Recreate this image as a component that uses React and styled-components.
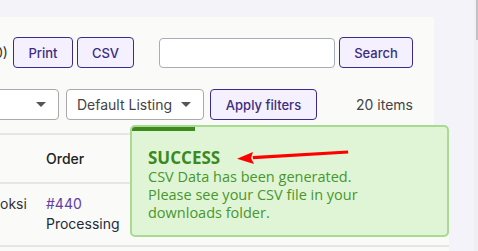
import React from "react";
import styled, { createGlobalStyle } from "styled-components";

const GlobalStyle = createGlobalStyle`
  html, body {
    margin: 0;
    padding: 0;
    overflow: hidden;
    background: #f4f3fa;
  }
  body {
    font-family: "Inter", "Liberation Sans", sans-serif;
  }
`;

const orders = [
  { customer: "oksi", number: "#440", status: "Processing" },
];

function App() {
  return (
    <Screen>
      <GlobalStyle />
      <Main>
        <Toolbar>
          <ActionRow>
            <Group>
              <Count>0)</Count>
              <Button $width={60}>Print</Button>
              <Button $width={57}>CSV</Button>
            </Group>
            <Group>
              <SearchInput type="text" />
              <Button $width={74}>Search</Button>
            </Group>
          </ActionRow>
          <FilterRow>
            <Select $width={140} $offset={-81}>
              <span></span>
              <Caret />
            </Select>
            <Select $width={138}>
              <span>Default Listing</span>
              <Caret />
            </Select>
            <Button $width={107}>Apply filters</Button>
            <ItemCount>20 items</ItemCount>
          </FilterRow>
        </Toolbar>

        <Table>
          <HeadRow>
            <NameCell></NameCell>
            <HeadCell>Order</HeadCell>
          </HeadRow>
          {orders.map((o) => (
            <BodyRow key={o.number}>
              <NameCell>{o.customer}</NameCell>
              <OrderCell>
                <OrderLink>{o.number}</OrderLink>
                <Status>{o.status}</Status>
              </OrderCell>
            </BodyRow>
          ))}
        </Table>

        <Toast>
          <Progress />
          <ToastTitle>SUCCESS</ToastTitle>
          <ToastText>
            CSV Data has been generated.
            <br />
            Please see your CSV file in your
            <br />
            downloads folder.
          </ToastText>
        </Toast>

        <Arrow width="120" height="20" viewBox="0 0 120 20">
          <polygon points="111,4.5 111.3,7.5 16,13.2 15.7,10" fill="#ff0000" />
          <polygon points="0,12.8 16,6 14,12 17,18" fill="#ff0000" />
        </Arrow>
      </Main>
      <Scrollbar>
        <Thumb />
      </Scrollbar>
    </Screen>
  );
}

export default App;

const Screen = styled.div`
  display: flex;
  width: 478px;
  height: 251px;
  background: #f4f3fa;
  overflow: hidden;
`;

const Main = styled.div`
  position: relative;
  flex: 1;
  display: flex;
  flex-direction: column;
  padding-top: 17px;
`;

const Toolbar = styled.div`
  width: 434px;
  box-sizing: border-box;
  background: #fafaf9;
  padding: 20px 21px 13px 0;
`;

const ActionRow = styled.div`
  display: flex;
  align-items: center;
  justify-content: space-between;
`;

const Group = styled.div`
  display: flex;
  align-items: center;
  gap: 4px;
`;

const Count = styled.span`
  font-size: 14px;
  color: #333;
  margin-left: -6px;
  margin-right: 1px;
`;

const Button = styled.button`
  width: ${(p) => p.$width}px;
  height: 31px;
  box-sizing: border-box;
  padding: 0;
  border: 1.5px solid #3d2b8c;
  border-radius: 4px;
  background: #f4f0fe;
  color: #3b2d80;
  font-family: "Inter", "Liberation Sans", sans-serif;
  font-size: 13px;
  font-weight: 500;
  white-space: nowrap;
  cursor: pointer;
`;

const SearchInput = styled.input`
  width: 176px;
  height: 30px;
  box-sizing: border-box;
  border: 1px solid #a9aeb6;
  border-radius: 4px;
  background: #fff;
`;

const FilterRow = styled.div`
  display: flex;
  align-items: center;
  gap: 6px;
  margin-top: 21px;
`;

const Select = styled.div`
  width: ${(p) => p.$width}px;
  height: 31px;
  box-sizing: border-box;
  margin-left: ${(p) => p.$offset || 0}px;
  margin-right: ${(p) => (p.$offset ? 1 : 0)}px;
  display: flex;
  align-items: center;
  justify-content: space-between;
  padding: 0 12px 0 10px;
  border: 1px solid #a9a9a9;
  border-radius: 4px;
  background: #fff;
  color: #444;
  font-size: 14px;
`;

const Caret = styled.i`
  width: 0;
  height: 0;
  border-left: 5px solid transparent;
  border-right: 5px solid transparent;
  border-top: 5px solid #555;
`;

const ItemCount = styled.span`
  margin-left: auto;
  font-size: 14px;
  color: #444;
`;

const Table = styled.div`
  width: 449px;
  flex: 1;
  background: #fafaf9;
  border-top: 2px solid #e5e5ea;
`;

const HeadRow = styled.div`
  display: flex;
  align-items: center;
  height: 47px;
  border-bottom: 2px solid #e5e5ea;
`;

const BodyRow = styled.div`
  display: flex;
  align-items: flex-start;
  padding: 10px 0 11px;
  border-bottom: 2px solid #e5e5ea;
`;

const NameCell = styled.div`
  width: 46px;
  font-size: 14px;
  line-height: 20px;
  color: #333;
`;

const HeadCell = styled.div`
  font-size: 14px;
  font-weight: 500;
  color: #222;
`;

const OrderCell = styled.div`
  display: flex;
  flex-direction: column;
  font-size: 14px;
  line-height: 20px;
`;

const OrderLink = styled.span`
  color: #6140a3;
`;

const Status = styled.span`
  color: #1e2b3c;
`;

const Toast = styled.div`
  position: absolute;
  left: 130px;
  top: 125px;
  width: 319px;
  height: 112px;
  box-sizing: border-box;
  padding: 21px 16px 0 16px;
  background: #dff5d5;
  border: 2px solid #a8da90;
  border-radius: 5px;
  overflow: hidden;
  font-family: "Open Sans", "Liberation Sans", sans-serif;
`;

const Progress = styled.div`
  position: absolute;
  left: 0;
  top: 0;
  width: 63px;
  height: 4px;
  background: #3e8a1f;
`;

const ToastTitle = styled.div`
  font-size: 17px;
  font-weight: 700;
  line-height: 20px;
  color: #3c891f;
`;

const ToastText = styled.div`
  font-size: 14.5px;
  line-height: 18px;
  color: #4a9530;
`;

const Arrow = styled.svg`
  position: absolute;
  left: 237px;
  top: 146px;
`;

const Scrollbar = styled.div`
  width: 4px;
  background: #efeff1;
  display: flex;
  justify-content: flex-end;
`;

const Thumb = styled.div`
  width: 2px;
  height: 40px;
  background: #c2c2c4;
`;
